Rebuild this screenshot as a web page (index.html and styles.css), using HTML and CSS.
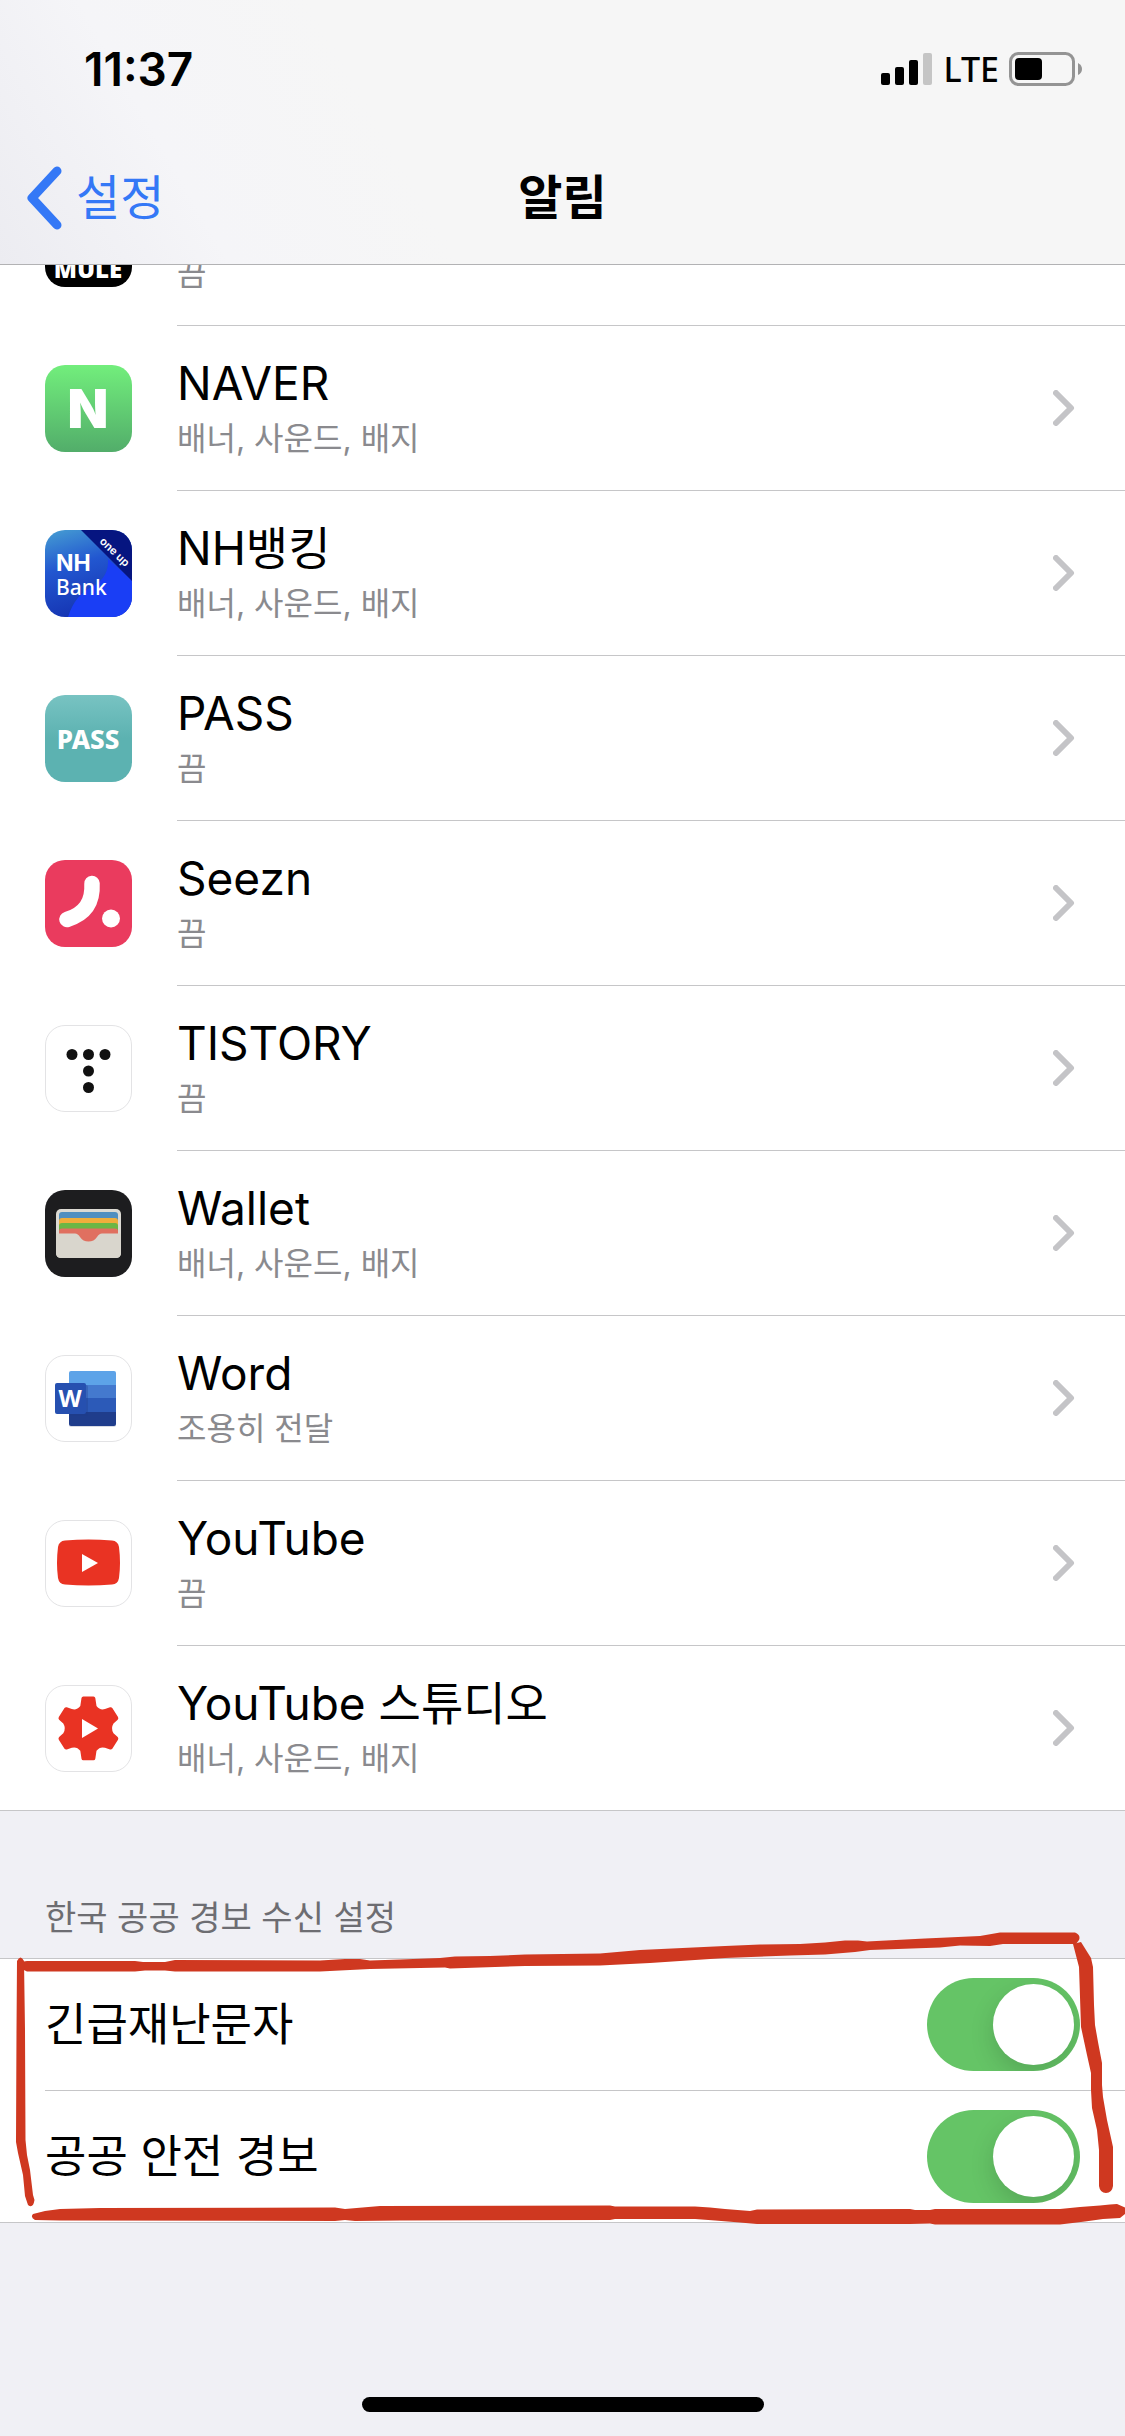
FILE: index.html
```html
<!DOCTYPE html>
<html lang="ko">
<head>
    <meta charset="UTF-8">
    <meta name="viewport" content="width=device-width, initial-scale=1.0">
    <title>알림</title>
    <link rel="stylesheet" href="styles.css">
</head>
<body>
    <!-- shared chevron for the app rows -->
    <svg class="defs" width="0" height="0" aria-hidden="true">
        <symbol id="chevron" viewBox="0 0 22 36">
            <path d="M3 3 L18 18 L3 33" fill="none" stroke="#c4c4c7" stroke-width="6" stroke-linecap="round" stroke-linejoin="round"/>
        </symbol>
    </svg>

    <header class="header">
        <div class="status-bar">
            <span class="time">11:37</span>
            <div class="status-icons">
                <svg width="52" height="33" viewBox="0 0 52 33" aria-hidden="true">
                    <rect x="0" y="20" width="9" height="12" rx="2"/>
                    <rect x="14" y="14" width="9" height="18" rx="2"/>
                    <rect x="28" y="7" width="9" height="25" rx="2"/>
                    <rect x="42" y="0" width="9" height="32" rx="2" fill="#c5c5c5"/>
                </svg>
                <span class="carrier">LTE</span>
                <svg width="74" height="34" viewBox="0 0 74 34" aria-hidden="true">
                    <rect x="1.5" y="1.5" width="63" height="31" rx="8" fill="none" stroke="#949494" stroke-width="3"/>
                    <rect x="6" y="6" width="27" height="22" rx="4"/>
                    <path d="M69 11 Q73 13 73 17 Q73 21 69 23 Z" fill="#949494"/>
                </svg>
            </div>
        </div>
        <nav class="nav-bar">
            <a class="back" href="#">
                <svg width="36" height="64" viewBox="0 0 36 64" aria-hidden="true">
                    <path d="M31 5 L6 32 L31 59" fill="none" stroke="#3478f6" stroke-width="9" stroke-linecap="round" stroke-linejoin="round"/>
                </svg>
                설정
            </a>
            <h1>알림</h1>
        </nav>
    </header>

    <main>
        <div class="app-list">
            <a class="app-row" href="#">
                <svg class="app-icon" viewBox="0 0 87 87" aria-hidden="true">
                    <rect width="87" height="87" rx="20"/>
                    <text class="mule" x="43" y="78" text-anchor="middle">MULE</text>
                </svg>
                <div class="app-body">
                    <div class="app-text">
                        <div class="app-name">MULE</div>
                        <div class="app-status">끔</div>
                    </div>
                    <svg class="chevron"><use href="#chevron"/></svg>
                </div>
            </a>
            <a class="app-row" href="#">
                <svg class="app-icon" viewBox="0 0 87 87" aria-hidden="true">
                    <defs>
                        <linearGradient id="naver" x1="0" y1="0" x2="0" y2="1">
                            <stop offset="0" stop-color="#72ee7c"/>
                            <stop offset="1" stop-color="#52ad6a"/>
                        </linearGradient>
                    </defs>
                    <rect width="87" height="87" rx="20" fill="url(#naver)"/>
                    <text class="naver" x="43" y="63" text-anchor="middle">N</text>
                </svg>
                <div class="app-body">
                    <div class="app-text">
                        <div class="app-name">NAVER</div>
                        <div class="app-status">배너, 사운드, 배지</div>
                    </div>
                    <svg class="chevron"><use href="#chevron"/></svg>
                </div>
            </a>
            <a class="app-row" href="#">
                <svg class="app-icon" viewBox="0 0 87 87" aria-hidden="true">
                    <defs>
                        <linearGradient id="nh" x1="0.2" y1="0" x2="0.5" y2="1">
                            <stop offset="0" stop-color="#4296d2"/>
                            <stop offset="0.4" stop-color="#2257d0"/>
                            <stop offset="1" stop-color="#1431b0"/>
                        </linearGradient>
                        <clipPath id="nh-clip"><rect width="87" height="87" rx="20"/></clipPath>
                    </defs>
                    <g clip-path="url(#nh-clip)">
                        <rect width="87" height="87" fill="url(#nh)"/>
                        <path d="M23 87 Q30 64 50 55 Q64 46 63 29 L87 50 V87 Z" fill="#1a3ef5"/>
                        <path d="M36 0 H87 V51 Z" fill="#061580"/>
                    </g>
                    <text class="nh-name" x="11" y="41">NH</text>
                    <text class="nh-bank" x="11" y="65">Bank</text>
                    <text class="nh-ribbon" x="54" y="12" transform="rotate(44 54 12)">one up</text>
                </svg>
                <div class="app-body">
                    <div class="app-text">
                        <div class="app-name">NH뱅킹</div>
                        <div class="app-status">배너, 사운드, 배지</div>
                    </div>
                    <svg class="chevron"><use href="#chevron"/></svg>
                </div>
            </a>
            <a class="app-row" href="#">
                <svg class="app-icon" viewBox="0 0 87 87" aria-hidden="true">
                    <defs>
                        <linearGradient id="pass" x1="0" y1="0" x2="0" y2="1">
                            <stop offset="0" stop-color="#78c3c2"/>
                            <stop offset="0.5" stop-color="#5cb2b1"/>
                            <stop offset="1" stop-color="#5cb2b1"/>
                        </linearGradient>
                    </defs>
                    <rect width="87" height="87" rx="20" fill="url(#pass)"/>
                    <text class="pass" x="43" y="54" text-anchor="middle">PASS</text>
                </svg>
                <div class="app-body">
                    <div class="app-text">
                        <div class="app-name">PASS</div>
                        <div class="app-status">끔</div>
                    </div>
                    <svg class="chevron"><use href="#chevron"/></svg>
                </div>
            </a>
            <a class="app-row" href="#">
                <svg class="app-icon" viewBox="0 0 87 87" aria-hidden="true">
                    <rect width="87" height="87" rx="20" fill="#ea3b5e"/>
                    <path d="M47 23.5 C48 42 40 54 22 59.5" fill="none" stroke="#fff" stroke-width="15.5" stroke-linecap="round"/>
                    <circle cx="66" cy="58.5" r="9"/>
                </svg>
                <div class="app-body">
                    <div class="app-text">
                        <div class="app-name">Seezn</div>
                        <div class="app-status">끔</div>
                    </div>
                    <svg class="chevron"><use href="#chevron"/></svg>
                </div>
            </a>
            <a class="app-row" href="#">
                <svg class="app-icon" viewBox="0 0 87 87" aria-hidden="true">
                    <rect class="white-tile" x="0.5" y="0.5" width="86" height="86" rx="19.5"/>
                    <g fill="#111">
                        <circle cx="27" cy="29.5" r="5.5"/>
                        <circle cx="43.5" cy="29.5" r="5.5"/>
                        <circle cx="60" cy="29.5" r="5.5"/>
                        <circle cx="43.5" cy="46" r="5.5"/>
                        <circle cx="43.5" cy="62.5" r="5.5"/>
                    </g>
                </svg>
                <div class="app-body">
                    <div class="app-text">
                        <div class="app-name">TISTORY</div>
                        <div class="app-status">끔</div>
                    </div>
                    <svg class="chevron"><use href="#chevron"/></svg>
                </div>
            </a>
            <a class="app-row" href="#">
                <svg class="app-icon" viewBox="0 0 87 87" aria-hidden="true">
                    <rect width="87" height="87" rx="20" fill="#1d1d1f"/>
                    <rect x="11" y="19" width="65" height="49" rx="5" fill="#dcdad3"/>
                    <path d="M14 44 V25 Q14 22 17 22 H70 Q73 22 73 25 V44 Z" fill="#508fc0"/>
                    <path d="M14 44 V31 Q14 28 17 28 H70 Q73 28 73 31 V44 Z" fill="#efae3c"/>
                    <path d="M14 44 V36 Q14 33 17 33 H70 Q73 33 73 36 V44 Z" fill="#6bb645"/>
                    <path d="M14 44 V41 Q14 38.5 17 38.5 H70 Q73 38.5 73 41 V53 H14 Z" fill="#e07060"/>
                    <path d="M11 43.5 H30 Q33 43.5 35 47 Q38 51.5 43.5 51.5 Q49 51.5 52 47 Q54 43.5 57 43.5 H76 V63 Q76 68 71 68 H16 Q11 68 11 63 Z" fill="#d9d6cd"/>
                </svg>
                <div class="app-body">
                    <div class="app-text">
                        <div class="app-name">Wallet</div>
                        <div class="app-status">배너, 사운드, 배지</div>
                    </div>
                    <svg class="chevron"><use href="#chevron"/></svg>
                </div>
            </a>
            <a class="app-row" href="#">
                <svg class="app-icon" viewBox="0 0 87 87" aria-hidden="true">
                    <rect class="white-tile" x="0.5" y="0.5" width="86" height="86" rx="19.5"/>
                    <rect x="24" y="18" width="47" height="54" rx="2" fill="#d8dbe4"/>
                    <path d="M24 30 V18 Q24 16 26 16 H69 Q71 16 71 18 V30 Z" fill="#5da3e8"/>
                    <rect x="24" y="30" width="47" height="14" fill="#4479ce"/>
                    <rect x="24" y="43" width="47" height="14" fill="#2c5ab8"/>
                    <path d="M24 57 H71 V69 Q71 71 69 71 H26 Q24 71 24 69 Z" fill="#1f3d8c"/>
                    <rect x="24" y="30" width="19" height="31" rx="2" fill="#1f3d8c" opacity="0.3"/>
                    <rect x="10" y="28" width="31" height="31" rx="2" fill="#2650b0"/>
                    <text class="word" x="25" y="52" text-anchor="middle">W</text>
                </svg>
                <div class="app-body">
                    <div class="app-text">
                        <div class="app-name">Word</div>
                        <div class="app-status">조용히 전달</div>
                    </div>
                    <svg class="chevron"><use href="#chevron"/></svg>
                </div>
            </a>
            <a class="app-row" href="#">
                <svg class="app-icon" viewBox="0 0 87 87" aria-hidden="true">
                    <rect class="white-tile" x="0.5" y="0.5" width="86" height="86" rx="19.5"/>
                    <path d="M20 20.5 Q43.5 18.5 67 20.5 Q73 21 74 27 Q76 43 74 58 Q73 64 67 64.5 Q43.5 66.5 20 64.5 Q14 64 13 58 Q11 43 13 27 Q14 21 20 20.5 Z" fill="#e93323"/>
                    <path d="M37 34 L53 43 L37 52 Z" fill="#fff"/>
                </svg>
                <div class="app-body">
                    <div class="app-text">
                        <div class="app-name">YouTube</div>
                        <div class="app-status">끔</div>
                    </div>
                    <svg class="chevron"><use href="#chevron"/></svg>
                </div>
            </a>
            <a class="app-row" href="#">
                <svg class="app-icon" viewBox="0 0 87 87" aria-hidden="true">
                    <rect class="white-tile" x="0.5" y="0.5" width="86" height="86" rx="19.5"/>
                    <path d="M43.4 11.5 H48.5 Q50 11.5 50.3 13 L51.5 21 Q55 25.5 60 24 L65 22.3 Q66.5 22 67.3 23 L73 32 Q73.8 33.5 72.7 34.7 L68.5 38.5 Q65.5 43.4 68.5 48.3 L72.7 52.1 Q73.8 53.3 73 54.8 L67.3 63.8 Q66.5 64.8 65 64.5 L60 62.8 Q55 61.3 51.5 65.8 L50.3 73.8 Q50 75.3 48.5 75.3 H38.3 Q36.8 75.3 36.5 73.8 L35.3 65.8 Q31.8 61.3 26.8 62.8 L21.8 64.5 Q20.3 64.8 19.5 63.8 L13.8 54.8 Q13 53.3 14.1 52.1 L18.3 48.3 Q21.3 43.4 18.3 38.5 L14.1 34.7 Q13 33.5 13.8 32 L19.5 23 Q20.3 22 21.8 22.3 L26.8 24 Q31.8 25.5 35.3 21 L36.5 13 Q36.8 11.5 38.3 11.5 Z" fill="#e93323"/>
                    <path d="M37 34 L53 43.5 L37 53 Z" fill="#fff"/>
                </svg>
                <div class="app-body">
                    <div class="app-text">
                        <div class="app-name">YouTube 스튜디오</div>
                        <div class="app-status">배너, 사운드, 배지</div>
                    </div>
                    <svg class="chevron"><use href="#chevron"/></svg>
                </div>
            </a>
        </div>

        <h2 class="group-title">한국 공공 경보 수신 설정</h2>
        <div class="alert-list">
            <div class="alert-row">
                <label for="emergency">긴급재난문자</label>
                <input class="switch" type="checkbox" role="switch" id="emergency" checked>
            </div>
            <div class="alert-row">
                <label for="safety">공공 안전 경보</label>
                <input class="switch" type="checkbox" role="switch" id="safety" checked>
            </div>
            <!-- hand drawn red box around the two switches -->
            <svg class="marker" viewBox="0 0 1125 300" preserveAspectRatio="none" aria-hidden="true">
                <path d="M27 31 L135 31 L143 32 L165 32 L175 30 L320 30.5 L345 29 L360 29 L370 30.5 L400 29.5 L440 28 L455 26.5 L490 26 L525 24.5 L600 23.5 L640 20 L725 16 L760 14.5 L800 14 L825 12.5 L845 10.5 L858 10.5 L867 11.5 L925 8.5 L980 6 L1000 2.5 L1075 2.5 Q1081 5 1079 10 L1076 14 L1003 14 L990 16 L960 15.5 L940 17.5 L870 20 L855 22 L825 24.5 L790 25.5 L725 28 L650 33 L600 35.5 L525 36 L450 38.5 L445 37.5 L370 39 L360 39.5 L320 41.5 L175 41.5 L165 40.5 L145 40.5 L135 41.5 L27 41.5 L20 38 L20 32 Z"/>
                <path d="M17 31 Q20.5 24 24 31 L25 100 L25.5 210 L27 225 L30 240 L33 265 L34.5 270 Q33 279 28 275 L25 266 L23 245 L18 223 L16 212 L16.5 100 Z"/>
                <path d="M1073 14 L1079 37 L1081 97 L1087 125 L1091 143 L1091 160 L1092 178 L1097 200 L1099 220 L1099 256 Q1100 263 1106 263 Q1112 263 1113 256 L1113 217 L1107 190 L1103 167 L1102 155 L1102 133 L1098 112 L1095 95 L1094 75 L1093 37 L1091 28 L1081 12 Z"/>
                <path d="M33 284 L45 281 L60 279 L100 278 L335 277.5 L345 279 L380 276 L610 275.5 L615 276.5 L695 276.5 L710 277.5 L725 279 L750 281 L757 279.5 L910 279 L915 280 L930 280 L935 279 L1060 279 L1080 277 L1100 275.5 L1110 274.5 L1117 274 L1125 277.5 L1125 284 L1120 288 L1103 289 L1085 291.5 L1060 294.5 L935 294.5 L930 293.5 L910 294 L757 294 L740 292.5 L715 290.5 L695 289 L615 289 L610 290 L400 290.5 L355 291 L345 290 L335 291 L60 290.5 L35 290 Q30 287 33 284 Z"/>
            </svg>
        </div>
    </main>

    <div class="home-indicator"></div>
</body>
</html>
```
FILE: styles.css
```css
* {
    box-sizing: border-box;
}
body {
    margin: 0;
    min-height: 100vh;
    background-color: #f0f0f5;
    font-family: Inter, "Noto Sans CJK KR", sans-serif;
    color: #000;
}
a {
    color: inherit;
    text-decoration: none;
}
.defs {
    position: absolute;
}

/* header */
.header {
    position: sticky;
    top: 0;
    z-index: 2;
    height: 265px;
    background: linear-gradient(60deg, #ececf1 0, #f5f5f8 200px, #f6f6f6 400px);
    border-bottom: 1px solid #b2b2b4;
}
.status-bar {
    display: flex;
    justify-content: space-between;
    align-items: center;
    height: 138px;
    padding: 0 42px 0 84px;
}
.time {
    font-size: 46px;
    font-weight: 600;
}
.status-icons {
    display: flex;
    align-items: center;
    gap: 10px;
}
.carrier {
    font-family: "Noto Sans", sans-serif;
    font-size: 34px;
    line-height: 36px;
    font-weight: 500;
}
.nav-bar {
    display: grid;
    grid-template-columns: 1fr auto 1fr;
    align-items: center;
    height: 120px;
    padding: 0 26px;
}
.nav-bar h1 {
    margin: 0;
    font-size: 48px;
    line-height: 64px;
    font-weight: 600;
}
.back {
    display: flex;
    align-items: center;
    gap: 14px;
    font-size: 48px;
    line-height: 64px;
    color: #3478f6;
}

/* app rows */
.app-list {
    /* scrolled so the first row is partly under the header */
    margin-top: -104px;
    background-color: #fff;
    border-bottom: 1px solid #c6c6c8;
}
.app-row {
    display: flex;
    align-items: center;
    gap: 45px;
    padding-left: 45px;
}
.app-icon {
    width: 87px;
    height: 87px;
    flex-shrink: 0;
}
.app-body {
    flex: 1;
    display: flex;
    align-items: center;
    justify-content: space-between;
    height: 165px;
    padding-right: 50px;
    border-bottom: 1px solid #c6c6c8;
}
.app-row:last-child .app-body {
    height: 164px;
    border-bottom: none;
}
.app-text {
    padding-top: 2px;
}
.app-name {
    font-size: 46px;
    line-height: 60px;
}
.app-status {
    font-size: 32px;
    line-height: 52px;
    color: #8a8a8e;
}
.chevron {
    width: 22px;
    height: 36px;
}

/* app icon parts */
.app-icon text {
    fill: #fff;
}
.app-icon circle {
    fill: #fff;
}
.app-icon g circle {
    fill: #111;
}
.white-tile {
    fill: #fff;
    stroke: #e3e3e5;
}
.mule {
    font: 800 24px "Open Sans", sans-serif;
}
.naver {
    font: 900 53px Inter, sans-serif;
}
.nh-name {
    font: 700 23px Inter, sans-serif;
}
.nh-bank {
    font: 500 21px "Noto Sans", sans-serif;
}
.nh-ribbon {
    font: 600 11px Inter, sans-serif;
}
.pass {
    font: 800 26px "Noto Sans", sans-serif;
}
.word {
    font: 700 24px "Open Sans", sans-serif;
}

/* public alerts */
.group-title {
    margin: 0;
    padding: 83px 45px 16px;
    font-size: 34px;
    line-height: 48px;
    font-weight: 400;
    color: #6d6d72;
}
.alert-list {
    position: relative;
    background-color: #fff;
    border-top: 1px solid #c6c6c8;
    border-bottom: 1px solid #c6c6c8;
}
.alert-row {
    display: flex;
    align-items: center;
    justify-content: space-between;
    margin-left: 45px;
    padding: 19px 45px 19px 0;
    font-size: 45px;
    line-height: 60px;
}
.alert-row + .alert-row {
    border-top: 1px solid #c6c6c8;
}
.switch {
    appearance: none;
    width: 153px;
    height: 93px;
    margin: 0;
    padding: 6px;
    display: flex;
    border-radius: 47px;
    background-color: #e9e9ea;
    overflow: hidden;
    cursor: pointer;
}
.switch::before {
    content: "";
    width: 81px;
    height: 81px;
    border-radius: 50%;
    background-color: #fff;
    box-shadow: 0 9px 24px rgba(0, 0, 0, 0.15);
}
.switch:checked {
    justify-content: flex-end;
    background-color: #65c466;
}
.marker {
    position: absolute;
    left: 0;
    top: -29px;
    width: 100%;
    height: 300px;
    fill: #cf3820;
    pointer-events: none;
}

.home-indicator {
    position: fixed;
    left: 50%;
    bottom: 24px;
    width: 402px;
    height: 15px;
    transform: translateX(-50%);
    border-radius: 8px;
    background-color: #000;
}
```
